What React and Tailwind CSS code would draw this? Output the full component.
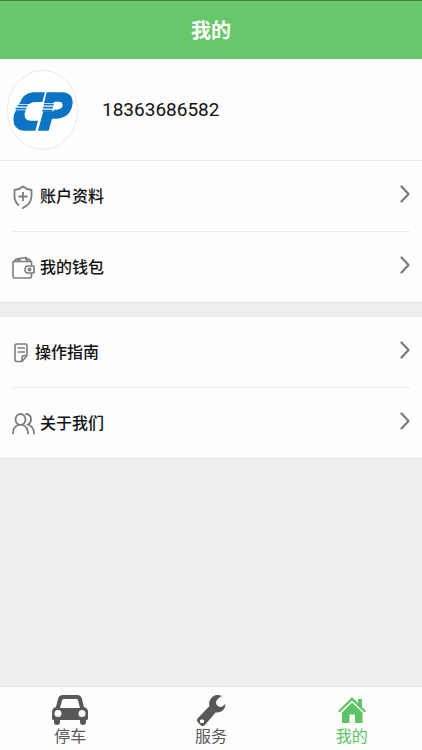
import React from 'react';

const CpLogo = () => (
  <svg viewBox="0 0 180 117" className="mt-1 h-[39px] w-[60px]" aria-hidden="true">
    <path
      fill="#0b74c4"
      d="M96 1 L88 30 H66 Q56 30 49 36 H19 Q31 3 60 1 Z M9 55 H38 Q34 62 35 72 Q37 86 52 86 H75 L67 116 H32 Q1 114 1 82 Q1 66 9 55 Z"
    />
    <path
      fill="#0b74c4"
      d="M101 1 H148 Q180 3 179 34 Q174 76 134 80 H117 L107 116 H75 L91 58 H122 V53 H132 Q148 51 149 40 Q149 30 138 29 H125 L122 33 H93 Z"
    />
    <path stroke="#0b74c4" strokeWidth="5" d="M14 41 H44 M8 50 H40 M92 38 H122 M90 47 H120 M88 56 H118" />
  </svg>
);

const ShieldIcon = () => (
  <svg viewBox="-1 0 23 25" className="h-[25px] w-[23px]" fill="none" stroke="#7d7d7d" strokeWidth="1.8" aria-hidden="true">
    <path d="M6 20.500 Q1.500 17 1.500 11 V5 Q6.500 4.500 10 1.500 Q13.500 4.500 18.500 5 V11 Q18.500 19 9 23.500" strokeLinejoin="round" />
    <path d="M10 7 V16 M5.500 11.500 H14.500" />
  </svg>
);

const WalletIcon = () => (
  <svg viewBox="0 0 23 24" className="h-6 w-[23px]" fill="none" stroke="#7d7d7d" strokeWidth="1.6" strokeLinejoin="round" aria-hidden="true">
    <path d="M19.500 10 V5.500 H1 V20.500 Q1 22 2.500 22 H18 Q19.500 22 19.500 20.500 V17" />
    <path d="M2 5.500 L4 3 L8 2.500 V5 M5 5.500 L7 2.500 L14 1.500 L15.500 5.500 M13 3 H17 L18.500 5.500" />
    <path d="M22 10 H16 Q13 10 13 13.500 Q13 17 16 17 H22 Z" />
    <rect x="16.500" y="12.500" width="2" height="2" />
  </svg>
);

const NoteIcon = () => (
  <svg viewBox="-2 0 18 20" className="h-5 w-[18px]" fill="none" stroke="#7d7d7d" strokeWidth="1.6" strokeLinejoin="round" aria-hidden="true">
    <path d="M8 18.500 H2.500 Q1 18.500 1 17 V2.500 Q1 1 2.500 1 H11.500 Q13 1 13 2.500 V12.500 L8 18.500 V15 Q8 12.500 10 12.500 H13" />
    <path d="M3.500 5 H11 M3.500 9 H11" />
  </svg>
);

const PeopleIcon = () => (
  <svg viewBox="0 0 23 22" className="h-[22px] w-[23px]" fill="none" stroke="#7d7d7d" strokeWidth="1.8" strokeLinecap="round" aria-hidden="true">
    <ellipse cx="8.500" cy="6.500" rx="5" ry="5.500" />
    <path d="M1 20.500 Q1 14 6 12 M11 12 Q16 14 16 20.500" />
    <path d="M14 1 Q19 1.500 19 6.500 Q19 10 16 11.500 Q22 13.500 22 20.500" />
  </svg>
);

const CarIcon = () => (
  <svg viewBox="0 0 36 32" className="h-8 w-9" fill="#58585a" aria-hidden="true">
    <path
      fillRule="evenodd"
      d="M11 0 H25 Q29 0 30 4 L32 12 Q36 13 36 17 V24 Q36 25 34 25 V27 Q34 30 31 30 Q28 30 28 27 V25 H8 V27 Q8 30 5 30 Q2 30 2 27 V25 Q0 25 0 24 V17 Q0 13 4 12 L6 4 Q7 0 11 0 Z M11.500 4 Q10.500 4 10 5.500 L8 13 H28 L26 5.500 Q25.500 4 24.500 4 Z M6 15 A3.500 3.500 0 1 0 6 22 A3.500 3.500 0 1 0 6 15 Z M30 15 A3.500 3.500 0 1 0 30 22 A3.500 3.500 0 1 0 30 15 Z"
    />
  </svg>
);

const WrenchIcon = () => (
  <svg viewBox="0 0 30 32" className="h-8 w-[30px]" fill="#58585a" aria-hidden="true">
    <path
      fillRule="evenodd"
      d="M26 1 Q18 -2 14 5 Q12.500 8 13.500 11 L2 23 Q0 25 2 27.500 L5 30.500 Q7 32 9 30 L19.500 17.500 Q29 18 29.500 9 L25.500 12 Q21 12 20 8 Q20 4 26 1 Z M6 24.500 A1.800 1.800 0 1 1 6 28 A1.800 1.800 0 1 1 6 24.500 Z"
    />
  </svg>
);

const HomeIcon = () => (
  <svg viewBox="0 0 28 26" className="mb-1 h-[26px] w-7" fill="#5cc465" aria-hidden="true">
    <path d="M14 0 L20 6 V2 H24 V10 L28 14 L26.500 15.500 L14 3.500 L1.500 15.500 L0 14 Z" />
    <path d="M14 5.500 L24.500 15.500 V26 H17 V17.500 H11.500 V26 H4 V15.500 Z" />
  </svg>
);

const Chevron = () => (
  <svg viewBox="0 0 10 18" className="mb-1.5 ml-auto h-[18px] w-[10px]" fill="none" stroke="#7a7a7a" strokeWidth="2.2" strokeLinecap="round" strokeLinejoin="round" aria-hidden="true">
    <path d="M1.500 1.500 L8.500 9 L1.500 16.500" />
  </svg>
);

const MenuGroup = ({ items }) => (
  <ul className="border-b border-[#e4e4e4] bg-[#fdfdfd] px-3">
    {items.map(({ label, icon: Icon }) => (
      <li key={label} className="border-b border-[#ececec] last:border-b-0">
        <a href="#" className="flex h-[70px] items-center gap-[5px] pt-0.5 text-[16px] font-medium text-[#111]">
          <Icon />
          <span>{label}</span>
          <Chevron />
        </a>
      </li>
    ))}
  </ul>
);

const tabs = [
  { label: '停车', icon: CarIcon, color: 'text-[#58585a]' },
  { label: '服务', icon: WrenchIcon, color: 'text-[#58585a]' },
  { label: '我的', icon: HomeIcon, color: 'text-[#5cc465]' },
];

const App = () => {
  return (
    <div className="flex min-h-screen flex-col bg-[#eeeeee] font-['Roboto','Noto_Sans_CJK_SC',sans-serif]">
      <header className="flex h-[59px] items-center justify-center border-t border-[#3f7d48] bg-[#67c76b] pt-0.5">
        <h1 className="text-[20px] font-bold text-white">我的</h1>
      </header>

      <main className="flex-1">
        <section className="flex h-[102px] items-center gap-6 border-b border-[#e8e8e8] bg-[#fdfdfd] px-[7px]">
          <div className="flex h-20 w-[71px] items-center justify-center rounded-[50%] border border-[#ebebeb] bg-white">
            <CpLogo />
          </div>
          <span className="pt-0.5 text-[19px] text-[#111]">18363686582</span>
        </section>

        <div className="flex flex-col gap-3.5">
          <MenuGroup
            items={[
              { label: '账户资料', icon: ShieldIcon },
              { label: '我的钱包', icon: WalletIcon },
            ]}
          />
          <MenuGroup
            items={[
              { label: '操作指南', icon: NoteIcon },
              { label: '关于我们', icon: PeopleIcon },
            ]}
          />
        </div>
      </main>

      <nav className="grid h-16 grid-cols-3 border-t border-[#e6e6e6] bg-[#fdfdfd]">
        {tabs.map(({ label, icon: Icon, color }) => (
          <a key={label} href="#" className={`flex flex-col items-center justify-end pb-[3px] ${color}`}>
            <Icon />
            <span className="text-[16px] leading-5">{label}</span>
          </a>
        ))}
      </nav>
    </div>
  );
};

export default App;
